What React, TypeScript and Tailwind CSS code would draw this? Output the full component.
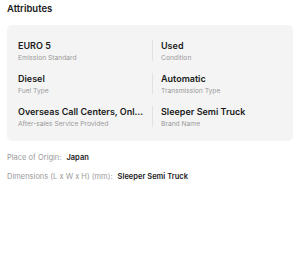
const attrs: Array<{ value: string; label: string }> = [
  { value: "EURO 5", label: "Emission Standard" },
  { value: "Used", label: "Condition" },
  { value: "Diesel", label: "Fuel Type" },
  { value: "Automatic", label: "Transmission Type" },
  { value: "Overseas Call Centers, Online Support", label: "After-sales Service Provided" },
  { value: "Sleeper Semi Truck", label: "Brand Name" },
];

function Cell({ value, label }: { value: string; label: string }) {
  return (
    <div className="min-w-0">
      <div className="truncate text-[9px] font-semibold leading-[11px] text-[#1a1a1a]">{value}</div>
      <div className="mt-[3px] truncate text-[6.7px] leading-[9px] text-[#9a9a9a]">{label}</div>
    </div>
  );
}

export default function App() {
  const rows = [0, 2, 4].map((i) => [attrs[i], attrs[i + 1]]);

  return (
    <div className="h-[261px] w-[300px] bg-white px-[7px] font-['Inter',sans-serif]">
      <h2 className="pt-[4px] text-[9.5px] font-semibold leading-[10px] text-[#1a1a1a]">Attributes</h2>

      <div className="mt-[11px] rounded-[5px] bg-[#f4f4f4] px-[11px] pt-[15px] pb-[12px]">
        <div className="flex flex-col gap-[10px]">
          {rows.map(([left, right]) => (
            <div key={left.label} className="flex items-start">
              <div className="w-[126px] min-w-0">
                <Cell {...left} />
              </div>
              <div className="mx-[8px] h-[21px] w-px bg-[#e2e2e2]" />
              <div className="min-w-0 flex-1">
                <Cell {...right} />
              </div>
            </div>
          ))}
        </div>
      </div>

      <div className="mt-[12px] flex flex-col gap-[9px] text-[7.5px] leading-[10px]">
        <div>
          <span className="text-[#9a9a9a]">Place of Origin:</span>
          <span className="ml-[5px] font-semibold text-[#1a1a1a]">Japan</span>
        </div>
        <div>
          <span className="text-[#9a9a9a]">Dimensions (L x W x H) (mm):</span>
          <span className="ml-[5px] font-semibold text-[#1a1a1a]">Sleeper Semi Truck</span>
        </div>
      </div>
    </div>
  );
}
